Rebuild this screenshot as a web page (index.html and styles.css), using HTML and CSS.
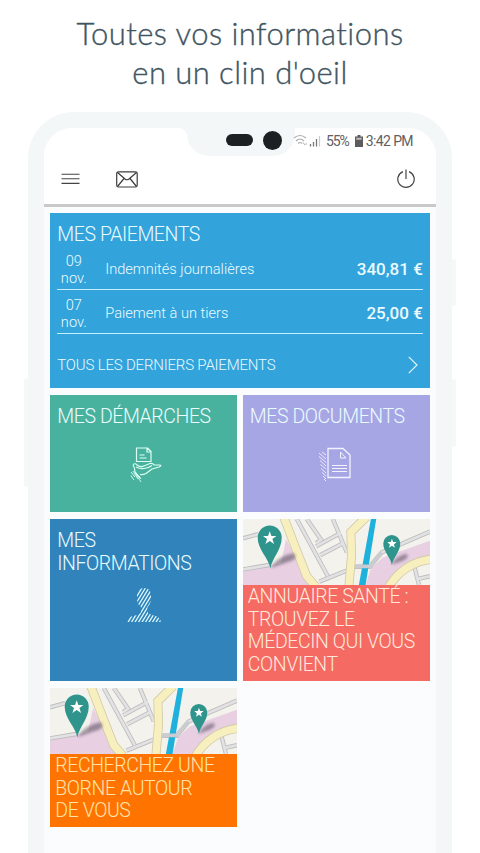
FILE: index.html
```html
<!DOCTYPE html>
<html lang="fr">
<head>
<meta charset="utf-8">
<title>Toutes vos informations</title>
<link rel="stylesheet" href="styles.css">
</head>
<body>
<svg class="defs" aria-hidden="true">
  <defs>
    <symbol id="map" viewBox="21 21 560 195" preserveAspectRatio="none">
      <rect x="21" y="21" width="560" height="195" fill="#f3f2ec"/>
      <path d="M21 172 L135 152 L150 80 L225 216 H21Z" fill="#e8cfe2"/>
      <path d="M581 85 L440 135 L405 165 L388 216 H470 Q500 150 581 145Z" fill="#e8cfe2"/>
      <g fill="none" stroke="#bcbcbc" stroke-width="13">
        <path d="M21 78 L66 66M21 170 L100 157M182 21 L275 190M250 206 L345 168M290 21 L332 120M240 102 L314 62M252 128 L322 92M212 21 L255 82 L240 92M350 162 H400 L436 120 L581 58M535 165 L548 216M545 198 L581 190"/>
      </g>
      <g fill="none" stroke="#e2e1e4" stroke-width="8">
        <path d="M21 78 L66 66M21 170 L100 157M182 21 L275 190M250 206 L345 168M290 21 L332 120M240 102 L314 62M252 128 L322 92M212 21 L255 82 L240 92M350 162 H400 L436 120 L581 58M535 165 L548 216M545 198 L581 190"/>
      </g>
      <path d="M404 21 H420 L388 216 H368Z" fill="#1eb1dc"/>
      <path d="M351 161 H400 L436 120" fill="none" stroke="#c9ccd1" stroke-width="11"/>
      <g fill="none" stroke="#d1cba8">
        <path d="M143 15 L180 110 L212 190 L240 222M390 15 L344 60 L346 130 L338 222M455 225 Q500 150 585 140" stroke-width="27"/>
      </g>
      <g fill="none" stroke="#f8efbf">
        <path d="M143 15 L180 110 L212 190 L240 222M390 15 L344 60 L346 130 L338 222M455 225 Q500 150 585 140" stroke-width="22"/>
      </g>
      <path d="M104 166 Q125 130 172 122 Q190 138 155 148Z M466 156 Q480 130 510 124 Q523 133 500 144Z" fill="#55485c" opacity=".55" filter="url(#soft)"/>
      <path d="M103 167 C98 137 65 112 65 76 A36 36 0 0 1 137 76 C137 112 108 137 103 167Z" fill="#2f958c"/>
      <path d="M467 157 C463 134 441 117 441 94 A25.500 25.500 0 0 1 492 94 C492 117 471 134 467 157Z" fill="#2f958c"/>
      <path d="M101 57 L106 71 L121 71 L109 80 L114 95 L101 86 L88 95 L93 80 L81 71 L96 71Z" fill="#fff"/>
      <path d="M467 79 L470.500 89 L481 89 L473 96 L476 106 L467 100 L458 106 L461 96 L453 89 L463.500 89Z" fill="#fff"/>
    </symbol>
    <filter id="soft"><feGaussianBlur stdDeviation="4"/></filter>
  </defs>
</svg>

<h1 class="headline"><span class="line1">Toutes vos informations</span><br><span class="line2">en un clin d'oeil</span></h1>

<div class="phone">
  <i class="side left"></i><i class="side right1"></i><i class="side right2"></i>
  <main class="screen">
    <header class="top">
      <div class="notch"><i class="speaker"></i><i class="camera"></i></div>
      <div class="status">
        <svg class="wifi" width="29" height="14" viewBox="0 0 29 14" fill="none" stroke="#aaa">
          <path d="M1 4 Q7 -1 13 4M3 7 Q7 3 11 7M5 9.500 Q7 7.500 9 9.500" stroke-width="1.100"/>
          <path d="M10 8.500 L12 11 M12.500 10 h1.500" />
          <path d="M17.500 10v2.500M20.500 8v4.500M23.500 5v7.500" stroke="#777" stroke-width="1.300"/><path d="M26.500 2v10.500" stroke="#ccc" stroke-width="1.200"/>
        </svg>
        <span class="pct">55%</span>
        <svg class="battery" width="8" height="12" viewBox="0 0 8 12"><path d="M2.500 0h3v1.500H8V12H0V1.500h2.500Z" fill="#5c5c5c"/><path d="M1.300 2.800h5.400v2H1.300Z" fill="#bbb"/></svg>
        <span class="time">3:42 PM</span>
      </div>
      <nav class="bar">
        <svg width="19" height="12" viewBox="0 0 19 12" stroke="#444" stroke-width="1.100"><path d="M.5 1.200h18M.5 5.800h18M.5 10.400h18"/></svg>
        <svg class="mail" width="22" height="17" viewBox="0 0 22 17" fill="none" stroke="#3c3c3c" stroke-width="1.200"><rect x=".7" y=".8" width="20.500" height="15.200" rx="1.800"/><path d="M1.500 1.500 L9 8 Q11 9.500 13 8 L20.500 1.500M1.500 15.500 L8 7.500M20.500 15.500 L14 7.500"/></svg>
        <svg class="power" width="18" height="20" viewBox="0 0 18 20" fill="none" stroke="#444" stroke-width="1.200"><path d="M6 2.600A8.200 8.200 0 1 0 12 2.600M9 .5V10"/></svg>
      </nav>
    </header>

    <div class="tiles">
      <section class="tile payments">
        <h2>MES PAIEMENTS</h2>
        <div class="row"><span class="date">09<br>nov.</span><span class="label">Indemnités journalières</span><b>340,81 €</b></div>
        <div class="row"><span class="date">07<br>nov.</span><span class="label">Paiement à un tiers</span><b>25,00 €</b></div>
        <div class="all"><span>TOUS LES DERNIERS PAIEMENTS</span>
          <svg width="10" height="18" viewBox="0 0 10 18" fill="none" stroke="#dff6ff" stroke-width="1.200"><path d="M.8 .8 L9 9 L.8 17.200"/></svg></div>
      </section>

      <section class="tile green">
        <h2>MES DÉMARCHES</h2>
        <svg class="icon hand" width="32" height="36" viewBox="0 0 32 36" fill="none" stroke="#d9fff2" stroke-width="1.200" stroke-linejoin="round">
          <path d="M6.500 1 H17.500 L21 4.500 V14.500 L6.500 14.500Z M17 1.200 V5 H21M9.500 8h5M9.500 11h7"/>
          <path d="M3 18 Q5 15.500 7 18 Q10 21 15 18.500 L20 16.500 Q23 16 24 18 L30 18 Q32 18.500 29 20 L22 22 L16 26.500 Q13 28 10 27.500 M3 18 Q5 21 5 25 L10 31M14 21.500 Q18 21.500 22 18.500M6 20 Q10 22 14 21.500"/>
          <path d="M1 25 L5 30M3 24 L8 32M.8 28.500 L4 33M5 26 L11 35M9 29 L11 32" stroke-width=".9"/>
        </svg>
      </section>

      <section class="tile lilac">
        <h2>MES DOCUMENTS</h2>
        <svg class="icon doc" width="34" height="36" viewBox="0 0 34 36" fill="none" stroke="#f4f2ff" stroke-width="1.300">
          <path d="M10 1.500 H25 L32 8 V30.500 H10Z"/><path d="M22.500 5 V11 H28 M22.500 5 L28 11" stroke-width="1"/>
          <path d="M14 18.500h15M14 21.500h15M14 24.500h15" stroke-width="1.200"/>
          <path d="M1 6 L8 12M1 9.500 L8 15.500M2 13.500 L8 19M2.500 17.500 L8 22M3 21.500 L8 26M4 25.500 L8 29M4 5 L8 8M5 29 L8 32M6 32 L8 34" stroke-width=".9"/>
        </svg>
      </section>

      <section class="tile blue">
        <h2>MES<br>INFORMATIONS</h2>
        <svg class="icon person" width="36" height="36" viewBox="0 0 36 36">
          <defs><clipPath id="bust"><path d="M11 7 Q12 1 18 1 Q24 1 25 7 V13 Q24 18 21.500 20 V25 Q23 27.500 30 29 Q34 30.500 35 35 H1 Q2 30 7 29 Q14 27.500 15 25 V20 Q11 17 11 12Z"/></clipPath></defs>
          <g clip-path="url(#bust)" stroke="#e0fbff" stroke-width="1.250"><path d="M-16 36 l22-36M-12.500 36 l22-36M-9 36 l22-36M-5.500 36 l22-36M-2 36 l22-36M1.500 36 l22-36M5 36 l22-36M8.500 36 l22-36M12 36 l22-36M15.500 36 l22-36M19 36 l22-36M22.500 36 l22-36M26 36 l22-36M29.500 36 l22-36M33 36 l22-36"/></g>
        </svg>
      </section>

      <section class="tile mapped red">
        <svg class="map"><use href="#map"/></svg>
        <h2>ANNUAIRE SANTÉ :<br>TROUVEZ LE<br>MÉDECIN QUI VOUS<br>CONVIENT</h2>
      </section>

      <section class="tile mapped orange">
        <svg class="map"><use href="#map"/></svg>
        <h2>RECHERCHEZ UNE<br>BORNE AUTOUR<br>DE VOUS</h2>
      </section>
    </div>
  </main>
</div>
</body>
</html>
```
FILE: styles.css
```css
* { box-sizing: border-box; }
html, body { margin: 0; height: 853px; overflow: hidden; }
body { background: #fff; font-family: Roboto, "Liberation Sans", sans-serif; }
h1, h2 { margin: 0; font-weight: 300; }
.defs { position: absolute; width: 0; height: 0; }

.headline {
  height: 112px;
  padding-top: 14px;
  text-align: center;
  font: 300 31px/39px Lato, "Open Sans", sans-serif;
  letter-spacing: .45px;
  font-variant-ligatures: none;
  color: #40555f;
  -webkit-text-stroke: .35px #40555f;
}

.phone {
  position: relative;
  width: 424px;
  height: 780px;
  margin: 0 auto;
  padding: 16px 16px 0;
  border-radius: 46px 46px 0 0;
  background: #f4f7f8;
}
.side { position: absolute; width: 5px; background: #f6f7f7; }
.left { left: -4px; top: 266px; height: 109px; border-radius: 3px 0 0 3px; }
.right1 { right: -4px; top: 147px; height: 47px; border-radius: 0 3px 3px 0; }
.right2 { right: -4px; top: 267px; height: 68px; border-radius: 0 3px 3px 0; }

.screen {
  height: 764px;
  border-radius: 28px 28px 0 0;
  background: #fafcfd;
  overflow: hidden;
}
.top {
  position: relative;
  height: 79px;
  background: #fff;
  border-bottom: 3px solid #c9c9c9;
}
.notch {
  position: absolute;
  left: 143px;
  top: 0;
  width: 108px;
  height: 28px;
  padding: 3px 0 0 39px;
  display: flex;
  gap: 10px;
  background: #f4f7f8;
  border-radius: 0 0 22px 22px;
}
.notch::before {
  content: "";
  position: absolute;
  left: -8px;
  top: 0;
  width: 8px;
  height: 8px;
  background: radial-gradient(circle at 0 100%, transparent 7.500px, #f4f7f8 8px);
}
.speaker { width: 27px; height: 12px; margin-top: 3px; border-radius: 6px; background: #1c2023; }
.camera { width: 19px; height: 19px; border-radius: 50%; background: #1c2023; flex: none; }
.status {
  position: relative;
  display: flex;
  justify-content: flex-end;
  align-items: center;
  height: 26px;
  padding-right: 23px;
  font-size: 14px;
  color: #606060;
}
.pct { margin-left: 4px; letter-spacing: -1.100px; }
.battery { margin: 0 3px 0 6px; }
.time { letter-spacing: -.6px; }
.bar { display: flex; align-items: center; height: 50px; padding: 0 21px 0 17px; }
.mail { margin-left: 36px; }
.power { margin-left: auto; }

.tiles {
  display: grid;
  grid-template-columns: 187px 187px;
  grid-template-rows: 175px 117px 162px 139px;
  gap: 7px 5.500px;
  padding: 6px 0 0 6.300px;
}
.tile { color: #eafcff; padding: 10px 7px 0; display: flex; flex-direction: column; overflow: hidden; }
.tile h2 { font-size: 19.500px; line-height: 23px; letter-spacing: -.42px; white-space: nowrap; }
.icon { margin: 19px auto 0; display: block; }
.hand { transform: translateX(2px); }
.doc { transform: translateX(-1px); }
.blue .person { margin-top: 12px; }
.payments { grid-column: span 2; background: #33a3dc; }
.green { background: #49b29e; }
.lilac { background: #a7a6e5; }
.blue { background: #3084bb; }
.row {
  display: flex;
  align-items: center;
  height: 44px;
  padding-top: 3px;
  border-bottom: 1px solid #c6ecf9;
  font-size: 14.600px;
  font-weight: 300;
}
.date { width: 33px; text-align: center; line-height: 17.500px; padding-top: 2px; }
.label { margin-left: 15px; }
.row b { margin-left: auto; font-size: 17px; font-weight: 500; }
.all { flex: 1; display: flex; align-items: center; justify-content: space-between; padding: 7px 5px 0 0; font-size: 15px; font-weight: 300; letter-spacing: -.19px; }
.mapped { padding: 0; }
.map { width: 187px; height: 66px; flex: none; display: block; }
.mapped h2 { padding: 1px 0 0 5px; flex: 1; color: #ffe9dc; line-height: 22.500px; }
.red { background: #f56a63; }
.orange { background: #ff7400; }
.orange h2 { color: #ffe3a8; }
```
